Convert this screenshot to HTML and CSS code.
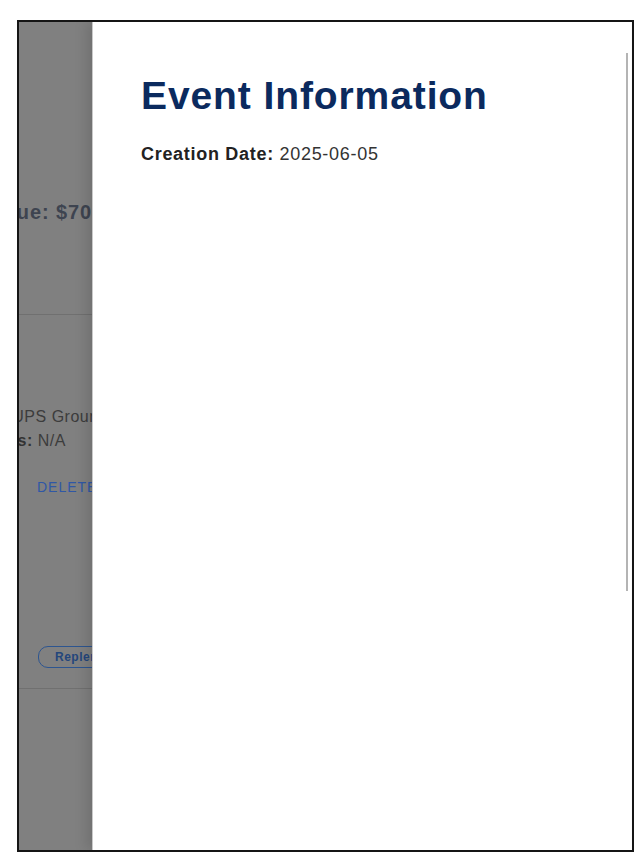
FILE: index.html
```html
<!DOCTYPE html>
<html lang="en">
<head>
<meta charset="utf-8">
<title>Event Information</title>
<link rel="stylesheet" href="styles.css">
</head>
<body>
  <div class="frame">
    <div class="backdrop">
      <div class="page">
        <p class="value">Total Value: $700.00</p>
        <hr class="rule rule-top">
        <p class="line ship">Carrier: UPS Ground</p>
        <p class="line notes"><b>Notes:</b> N/A</p>
        <div class="actions"><span class="link">DELETE</span></div>
        <div class="btn-row"><button class="outline">Replenish</button></div>
        <hr class="rule rule-bottom">
      </div>
    </div>
    <aside class="drawer">
      <h1 class="title">Event Information</h1>
      <p class="meta"><strong>Creation Date:</strong> 2025-06-05</p>
      <div class="scroll-thumb"></div>
    </aside>
  </div>
</body>
</html>
```
FILE: styles.css
```css
html, body {
  margin: 0;
  padding: 0;
  background: #ffffff;
}

body {
  font-family: "Liberation Sans", Arial, sans-serif;
}

.frame {
  margin: 20px 0 0 17px;
  width: 613px;
  height: 828px;
  border: 2px solid #151515;
  display: flex;
  overflow: hidden;
  position: relative;
}

.backdrop {
  width: 73px;
  flex: none;
  background: #808080;
  overflow: hidden;
  position: relative;
}

.page {
  width: 400px;
  padding-top: 178px;
}

.page p {
  margin: 0;
  white-space: nowrap;
}

.page .value {
  font-size: 20px;
  line-height: 24px;
  font-weight: 700;
  letter-spacing: 0.9px;
  color: #3e4450;
  margin-left: -91px;
}

.rule {
  border: 0;
  height: 1px;
  margin: 0;
  background: #707070;
}

.rule-top {
  margin-top: 90px;
}

.line {
  font-size: 16px;
  line-height: 24px;
  letter-spacing: 0.5px;
  color: #3c3c3c;
}

.page .ship {
  margin-top: 89.5px;
  margin-left: -69px;
}

.page .notes {
  margin-left: -39px;
}

.notes b {
  color: #333333;
}

.actions {
  margin-top: 22px;
  margin-left: 18px;
  height: 24px;
  line-height: 24px;
}

.link {
  font-size: 14px;
  letter-spacing: 1px;
  color: #2f57a6;
}

.btn-row {
  margin-top: 147px;
  margin-left: 19px;
  height: 22px;
}

.outline {
  height: 22px;
  box-sizing: border-box;
  border: 1.5px solid #2d5590;
  border-radius: 10px;
  background: transparent;
  padding: 0 16px;
  font-family: "Liberation Sans", Arial, sans-serif;
  font-size: 12px;
  font-weight: 700;
  letter-spacing: 0.5px;
  color: #24467c;
  white-space: nowrap;
}

.rule-bottom {
  margin-top: 20px;
}

.drawer {
  flex: none;
  width: 539px;
  box-sizing: border-box;
  background: #ffffff;
  border-left: 1px solid #c9c9c9;
  box-shadow: -6px 0 12px rgba(0, 0, 0, 0.12);
  padding: 52px 48px 0 48px;
  position: relative;
  z-index: 1;
}

.title {
  margin: 0;
  font-size: 39px;
  line-height: 44px;
  font-weight: 700;
  letter-spacing: 0.9px;
  color: #0b2a5e;
}

.meta {
  margin: 25px 0 0 0;
  font-size: 18px;
  line-height: 22px;
  letter-spacing: 0.7px;
  color: #333333;
}

.meta strong {
  color: #222222;
}

.scroll-thumb {
  position: absolute;
  right: 3px;
  top: 31px;
  width: 2px;
  height: 538px;
  background: #b4b4b4;
}
```
